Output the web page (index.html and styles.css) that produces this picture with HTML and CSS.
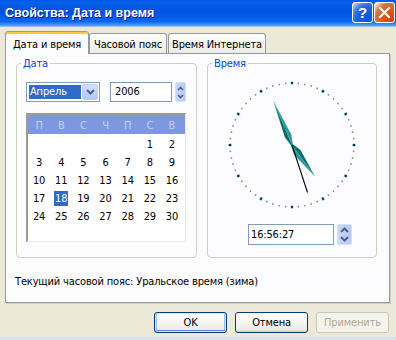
FILE: index.html
```html
<!DOCTYPE html>
<html lang="ru">
<head>
<meta charset="utf-8">
<title>Свойства: Дата и время</title>
<link rel="stylesheet" href="styles.css">
</head>
<body>
<div class="window">
  <div class="titlebar">
    <span class="title">Свойства: Дата и время</span>
    <div class="tb-buttons">
      <span class="tb-btn help">?</span>
      <span class="tb-btn close">
        <svg width="13" height="13" viewBox="0 0 13 13"><path d="M2 2 L11 11 M11 2 L2 11" stroke="#fff" stroke-width="2.2" stroke-linecap="square"/></svg>
      </span>
    </div>
  </div>
  <div class="body">
    <div class="tabs">
      <div class="tab active">Дата и время</div>
      <div class="tab t2">Часовой пояс</div>
      <div class="tab t3">Время Интернета</div>
    </div>
    <div class="panel">
      <div class="groups">
        <div class="group date">
          <span class="legend">Дата</span>
          <div class="date-controls">
            <div class="combo">
              <span class="combo-sel">Апрель</span>
              <span class="drop"><svg width="9" height="6" viewBox="0 0 9 6"><path d="M1 1 L4.5 4.5 L8 1" fill="none" stroke="#4D6185" stroke-width="2"/></svg></span>
            </div>
            <div class="edit year">2006</div>
            <div class="spin small">
              <svg width="7" height="5" viewBox="0 0 7 5"><path d="M1 4 L3.5 1.5 L6 4" fill="none" stroke="#4D6185" stroke-width="1.6"/></svg>
              <svg width="7" height="5" viewBox="0 0 7 5"><path d="M1 1 L3.5 3.5 L6 1" fill="none" stroke="#4D6185" stroke-width="1.6"/></svg>
            </div>
          </div>
          <div class="calendar">
            <div class="cal-head">
              <span>П</span><span>В</span><span>С</span><span>Ч</span><span>П</span><span>С</span><span>В</span>
            </div>
            <div class="cal-grid">
              <span></span><span></span><span></span><span></span><span></span><span>1</span><span>2</span>
              <span>3</span><span>4</span><span>5</span><span>6</span><span>7</span><span>8</span><span>9</span>
              <span>10</span><span>11</span><span>12</span><span>13</span><span>14</span><span>15</span><span>16</span>
              <span>17</span><span><b class="today">18</b></span><span>19</span><span>20</span><span>21</span><span>22</span><span>23</span>
              <span>24</span><span>25</span><span>26</span><span>27</span><span>28</span><span>29</span><span>30</span>
            </div>
          </div>
        </div>
        <div class="group time">
          <span class="legend">Время</span>
          <svg class="clock" width="130" height="130" viewBox="-65 -65 130 130">
            <circle r="62" fill="none" stroke="#8C8C8C" stroke-width="1.6" pathLength="60" stroke-dasharray="0.24 0.76" stroke-dashoffset="0.12"/>
            <circle r="62" fill="none" stroke="#8ED6DC" stroke-width="3.4" pathLength="12" stroke-dasharray="0.09 0.91" stroke-dashoffset="0.045"/>
            <circle r="62" fill="none" stroke="#0B2F3C" stroke-width="2.2" pathLength="12" stroke-dasharray="0.06 0.94" stroke-dashoffset="0.03"/>
            <g transform="rotate(144)">
              <polygon points="0,-39 -4,-9 0,4" fill="#0B6E6E"/>
              <polygon points="0,-39 4,-9 0,4" fill="#2B9A9A"/>
            </g>
            <g transform="rotate(337)">
              <polygon points="0,-48 -3.5,-10 0,4" fill="#0B6E6E"/>
              <polygon points="0,-48 3.5,-10 0,4" fill="#2B9A9A"/>
            </g>
            <line x1="0" y1="0" x2="15.5" y2="47.5" stroke="#000" stroke-width="1.1"/>
          </svg>
          <div class="time-row">
            <div class="edit clock-edit">16:56:27</div>
            <div class="spin">
              <svg width="9" height="6" viewBox="0 0 9 6"><path d="M1 5 L4.5 1.5 L8 5" fill="none" stroke="#4D6185" stroke-width="2"/></svg>
              <svg width="9" height="6" viewBox="0 0 9 6"><path d="M1 1 L4.5 4.5 L8 1" fill="none" stroke="#4D6185" stroke-width="2"/></svg>
            </div>
          </div>
        </div>
      </div>
      <div class="status">Текущий часовой пояс: Уральское время (зима)</div>
    </div>
    <div class="buttons">
      <span class="btn default">OK</span>
      <span class="btn">Отмена</span>
      <span class="btn disabled">Применить</span>
    </div>
  </div>
</div>
</body>
</html>
```

FILE: styles.css
```css
* { box-sizing: border-box; }
html, body { margin: 0; padding: 0; }
body {
  width: 396px;
  height: 340px;
  overflow: hidden;
  background: #ECE9D8;
  font-family: "DejaVu Sans Condensed", "DejaVu Sans", sans-serif;
  font-size: 11px;
  letter-spacing: -0.15px;
  color: #000;
}
.window {
  width: 396px;
  height: 340px;
  display: flex;
  flex-direction: column;
  background: #ECE9D8;
  border-bottom: 3px solid #D9E0F0;
}
.titlebar {
  flex: none;
  height: 27px;
  display: flex;
  align-items: center;
  justify-content: space-between;
  padding: 0 1px 2px 5px;
  background: linear-gradient(180deg, #0058EE 0%, #0A5FE6 10%, #0053E1 45%, #0A66F0 80%, #3A8CF8 90%, #5AA0FA 96%, #C9D6EE 100%);
}
.title {
  color: #fff;
  font-family: "Liberation Sans", sans-serif;
  font-weight: bold;
  font-size: 12.5px;
  letter-spacing: 0;
  text-shadow: 1px 1px 0 #0A1883;
}
.tb-buttons { display: flex; gap: 1px; }
.tb-btn {
  width: 21px;
  height: 21px;
  border: 1px solid #fff;
  border-radius: 3px;
  display: flex;
  align-items: center;
  justify-content: center;
  color: #fff;
  font-weight: bold;
  font-size: 15px;
  font-family: "Liberation Sans", sans-serif;
}
.help { background: radial-gradient(circle at 90% 90%, #0054E9 0%, #2263D5 55%, #4479E4 70%, #A3BBEC 90%, #fff 100%); }
.close { background: radial-gradient(circle at 90% 90%, #CC4600 0%, #DC6527 55%, #CD7546 70%, #FFCCB2 90%, #fff 100%); }

.body {
  flex: 1;
  display: flex;
  flex-direction: column;
  padding: 4px 7px 0 5px;
}
.tabs {
  display: flex;
  align-items: flex-end;
  height: 23px;
  margin-bottom: -1px;
  position: relative;
  z-index: 1;
}
.tab {
  height: 20px;
  margin-bottom: 1px;
  border: 1px solid #919B9C;
  border-bottom: none;
  border-radius: 3px 3px 0 0;
  background: linear-gradient(180deg, #FFFFFF, #F3F2EC 60%, #ECEBE6);
  display: flex;
  align-items: center;
  justify-content: center;
  padding-top: 1px;
}
.tab.active {
  width: 84px;
  height: 23px;
  margin-bottom: 0;
  background: #FCFCFE;
  border-top: 1px solid #E68B2C;
  box-shadow: inset 0 2px 0 #FFC83C;
  padding-top: 2px;
}
.t2 { width: 78px; }
.t3 { width: 98px; margin-left: 1px; }

.panel {
  width: 385px;
  height: 250px;
  border: 1px solid #919B9C;
  box-shadow: 1px 1px 0 #D0CEBF;
  background: #FCFCFE;
  display: flex;
  flex-direction: column;
  padding: 9px 0 0 10px;
}
.groups { display: flex; gap: 10px; }
.group {
  height: 195px;
  border: 1px solid #D0D0BF;
  border-radius: 4px;
  display: flex;
  flex-direction: column;
  align-items: flex-start;
}
.group.date { width: 181px; }
.group.time { width: 170px; }
.legend {
  margin: -7px 0 0 4px;
  padding: 0 2px;
  line-height: 13px;
  background: #FCFCFE;
  color: #0046D5;
}
.date-controls {
  display: flex;
  margin: 12px 0 0 9px;
}
.combo {
  width: 74px;
  height: 20px;
  border: 1px solid #7F9DB9;
  background: #fff;
  display: flex;
  padding: 1px;
}
.combo-sel {
  flex: 1;
  margin: 1px;
  background: #316AC5;
  color: #fff;
  line-height: 14px;
  padding-left: 1px;
}
.drop {
  width: 16px;
  border-radius: 2px;
  background: linear-gradient(180deg, #D6E2FC, #C1D3FB 50%, #B1C6F7);
  border: 1px solid #B9CBF3;
  display: flex;
  align-items: center;
  justify-content: center;
}
.edit {
  height: 20px;
  border: 1px solid #7F9DB9;
  background: #fff;
  line-height: 18px;
  padding-left: 4px;
}
.year { width: 62px; margin-left: 10px; }
.spin {
  width: 15px;
  height: 21px;
  margin-left: 3px;
  border-radius: 2px;
  background: linear-gradient(90deg, #C9D7F7, #B7CAF3);
  border: 1px solid #D4DFF8;
  display: flex;
  flex-direction: column;
  align-items: center;
  justify-content: space-around;
  padding: 1px 0;
}
.spin.small { width: 11px; height: 20px; }

.calendar {
  width: 160px;
  height: 129px;
  margin: 11px 0 0 9px;
  border-style: solid;
  border-width: 2px 1px 1px 2px;
  border-color: #9C9A94 #EDEBE4 #EDEBE4 #9C9A94;
  background: #fff;
}
.cal-head {
  height: 19px;
  background: #7D98E0;
  color: #C2D0F3;
  display: grid;
  grid-template-columns: repeat(7, 1fr);
  align-items: center;
  text-align: center;
  padding: 1px 2px 0 0;
}
.cal-grid {
  display: grid;
  grid-template-columns: repeat(7, 1fr);
  grid-template-rows: repeat(6, 18px);
  align-items: center;
  text-align: center;
  padding: 1px 2px 0 0;
}
.today {
  font-weight: normal;
  background: #316AC5;
  color: #fff;
  padding: 1px 1px;
}

.clock { margin: 10px 0 0 19px; display: block; }
.time-row { display: flex; margin: 14px 0 0 40px; }
.clock-edit { width: 86px; height: 21px; padding-left: 2px; line-height: 19px; }

.status {
  margin: 17px 0 0 -1px;
  line-height: 13px;
}

.buttons {
  display: flex;
  justify-content: flex-end;
  gap: 8px;
  margin-top: 9px;
}
.btn {
  width: 73px;
  height: 21px;
  border: 1px solid #003C74;
  border-radius: 3px;
  background: linear-gradient(180deg, #FFFFFF, #F4F3EE 60%, #ECEBE6 86%, #D6D0C5);
  display: flex;
  align-items: center;
  justify-content: center;
}
.btn.default { box-shadow: inset 0 0 0 1px #CEE7FF, inset 0 -2px 0 #6982EE, inset 2px 0 0 #9DB9EB, inset -2px 0 0 #9DB9EB; }
.btn.disabled {
  border-color: #C9C7BA;
  background: #F5F4EA;
  color: #ACA899;
}
```
